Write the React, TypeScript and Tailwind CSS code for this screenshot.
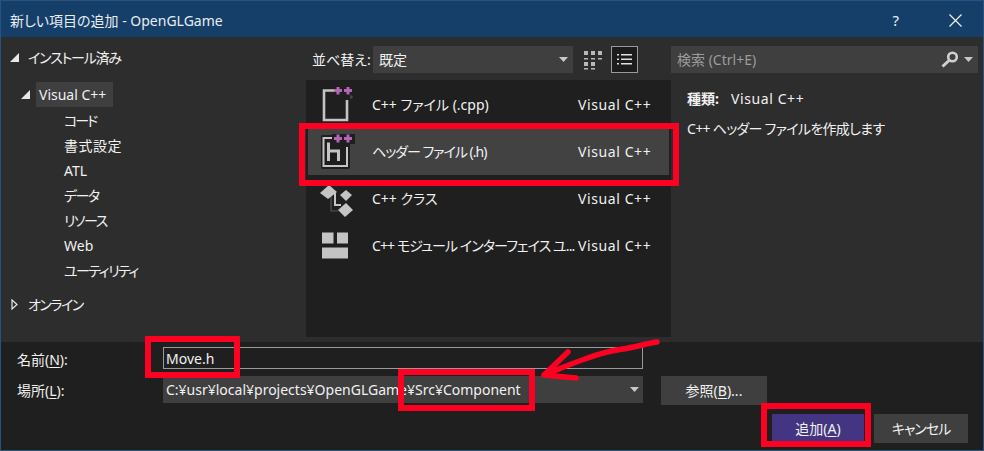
import { ReactNode } from "react";

const font = { fontFamily: '"Noto Sans", "Noto Sans CJK JP", sans-serif' };

function Tri({ open }: { open: boolean }) {
    return open ? (
        <svg width="9" height="9" viewBox="0 0 9 9" className="shrink-0"><path d="M9 0V9H0Z" fill="#e8e8e8" /></svg>
    ) : (
        <svg width="7" height="11" viewBox="0 0 7 11" className="shrink-0"><path d="M1 1L6 5.5L1 10Z" fill="none" stroke="#e8e8e8" strokeWidth="1.2" /></svg>
    );
}

function Plus({ x }: { x: number }) {
    return <path d={`M${x - 1.5} 0h3v2.5h2.5v3h-2.5v2.5h-3v-2.5h-2.5v-3h2.5z`} fill="#b565b5" />;
}

function CppIcon() {
    return (
        <svg width="36" height="36" viewBox="0 0 36 36">
            <path d="M14 3.5H4V33H27V13" fill="none" stroke="#c4c4c4" strokeWidth="2.6" />
            <path d="M31 8V12M30 10H33" fill="none" stroke="#555" strokeWidth="1" />
            <g transform="translate(0 -0.5)"><Plus x={18} /><Plus x={28} /></g>
        </svg>
    );
}

function HeaderIcon() {
    return (
        <svg width="36" height="36" viewBox="0 0 36 36">
            <rect x="1" y="1" width="29" height="34" rx="2" fill="#1e1e1e" />
            <path d="M14 4H3.5V32H27V13" fill="none" stroke="#c4c4c4" strokeWidth="2" />
            <path d="M8.5 8.5V27M8.5 17H18.5V27" fill="none" stroke="#c4c4c4" strokeWidth="3" />
            <rect x="12" y="-1" width="23" height="11" fill="#1e1e1e" />
            <g transform="translate(0 0.5)"><Plus x={18} /><Plus x={28} /></g>
        </svg>
    );
}

function ClassIcon() {
    return (
        <svg width="36" height="36" viewBox="0 0 36 36">
            <path d="M11 14V30H18" fill="none" stroke="#555" strokeWidth="1.2" />
            <path d="M15 12V24H21" fill="none" stroke="#c4c4c4" strokeWidth="2" />
            <path d="M0 12L9 4L17 11L8 18Z" fill="#c4c4c4" />
            <path d="M20 14L26 9L32 14L26 20Z" fill="#c4c4c4" />
            <path d="M18 29L26 22L33 29L25 36Z" fill="#c4c4c4" />
        </svg>
    );
}

function ModuleIcon() {
    return (
        <svg width="36" height="36" viewBox="0 0 36 36">
            <rect x="2" y="4.5" width="11.5" height="11" fill="#c4c4c4" />
            <rect x="17" y="4.5" width="11" height="11" fill="#c4c4c4" />
            <rect x="2" y="19.5" width="26" height="11" fill="#c4c4c4" />
        </svg>
    );
}

function VisualCpp() {
    return <span className="tracking-[0.6px] whitespace-nowrap">Visual C++</span>;
}

function Row({ icon, name, nameClass, selected }: { icon: ReactNode; name: string; nameClass?: string; selected?: boolean }) {
    return (
        <div className={`flex h-[47px] items-center mx-[2px] ${selected ? "bg-[#424242]" : ""}`}>
            <div className="w-[64px] pl-[12px] flex items-center">{icon}</div>
            <div className="w-[206px] whitespace-nowrap"><span className={nameClass}>{name}</span></div>
            <VisualCpp />
        </div>
    );
}

function Arrow() {
    return <svg width="9" height="5" viewBox="0 0 9 5"><path d="M0 0H9L4.5 5Z" fill="#c8c8c8" /></svg>;
}

function Key({ k }: { k: string }) {
    return <span className="underline underline-offset-2">{k}</span>;
}

export default function App() {
    const subItems = [
        { label: "コード", cls: "tracking-[-2px]" },
        { label: "書式設定", cls: "tracking-[0.5px]" },
        { label: "ATL", cls: "" },
        { label: "データ", cls: "tracking-[-1.5px]" },
        { label: "リソース", cls: "tracking-[-1.5px]" },
        { label: "Web", cls: "" },
        { label: "ユーティリティ", cls: "tracking-[-1.5px]" },
    ];

    return (
        <div style={font} className="relative w-[984px] h-[451px] flex flex-col overflow-hidden border-x border-b border-[#28527f] bg-[#2d2d2d] text-[14px] text-[#f1f1f1] [font-feature-settings:'palt']">
            <div className="h-[37px] shrink-0 bg-[#153e69] flex items-center pl-[9px] pr-[21px] pt-[3px] border-t border-[#28527f]">
                <span className="flex-1 text-[#e8edf2]">新しい項目の追加 - OpenGLGame</span>
                <span className="text-[15px] mr-[50px]">?</span>
                <svg width="13" height="13" viewBox="0 0 13 13"><path d="M0.5 0.5L12.5 12.5M12.5 0.5L0.5 12.5" stroke="#f1f1f1" strokeWidth="1.2" /></svg>
            </div>

            <div className="h-[305px] shrink-0 flex">
                <div className="w-[305px] shrink-0 pt-[8px]">
                    <div className="h-[25px] flex items-center pl-[9px] gap-[9px]"><Tri open /><span className="tracking-[-1.2px]">インストール済み</span></div>
                    <div className="h-[25px] mt-[12px] flex items-center pl-[20px] gap-[6px]">
                        <Tri open />
                        <span className="bg-[#3f3f3f] h-[25px] w-[77px] pl-[3px] flex items-center">Visual C++</span>
                    </div>
                    <div className="pt-[1px]">
                        {subItems.map((s) => (
                            <div key={s.label} className="h-[25px] flex items-center pl-[63px]"><span className={s.cls}>{s.label}</span></div>
                        ))}
                    </div>
                    <div className="h-[25px] mt-[9px] flex items-center pl-[10px] gap-[10px]"><Tri open={false} /><span className="tracking-[-1.5px]">オンライン</span></div>
                </div>

                <div className="w-[365px] shrink-0 flex flex-col pt-[9px]">
                    <div className="h-[27px] flex items-center pl-[6px]">
                        <span className="w-[61px]">並べ替え:</span>
                        <div className="w-[200px] h-[27px] bg-[#3f3f3f] flex items-center justify-between pl-[6px] pr-[5px]">
                            <span>既定</span>
                            <Arrow />
                        </div>
                        <svg width="18" height="20" viewBox="0 0 18 20" className="ml-[11px]">
                            <g fill="#b8b8b8">
                                <rect x="0" y="1" width="4" height="4" /><rect x="7" y="1" width="4" height="4" /><rect x="14" y="1" width="4" height="4" />
                                <rect x="0" y="8" width="4" height="1.5" /><rect x="7" y="8" width="4" height="1.5" /><rect x="14" y="8" width="4" height="1.5" />
                                <rect x="0" y="12" width="4" height="4" /><rect x="7" y="12" width="4" height="4" />
                                <rect x="0" y="18" width="4" height="1.5" /><rect x="7" y="18" width="4" height="1.5" />
                            </g>
                        </svg>
                        <div className="ml-[9px] w-[27px] h-[27px] border border-[#9a9a9a] bg-[#1c1c1c] flex items-center justify-center">
                            <svg width="15" height="13" viewBox="0 0 15 13" fill="#e0e0e0">
                                <rect x="0" y="1" width="2" height="1.5" /><rect x="4" y="1" width="11" height="1.5" />
                                <rect x="0" y="5.5" width="2" height="1.5" /><rect x="4" y="5.5" width="11" height="1.5" />
                                <rect x="0" y="10" width="2" height="1.5" /><rect x="4" y="10" width="11" height="1.5" />
                            </svg>
                        </div>
                    </div>
                    <div className="mt-[7px] h-[257px] bg-[#1f1f1f] pt-[1px]">
                        <Row icon={<CppIcon />} name="C++ ファイル (.cpp)" />
                        <Row icon={<HeaderIcon />} name="ヘッダー ファイル (.h)" nameClass="tracking-[-1px]" selected />
                        <Row icon={<ClassIcon />} name="C++ クラス" />
                        <Row icon={<ModuleIcon />} name="C++ モジュール インターフェイス ユ..." nameClass="tracking-[-0.9px]" />
                    </div>
                </div>

                <div className="flex-1 pt-[9px] pr-[5px]">
                    <div className="h-[27px] bg-[#3f3f3f] flex items-center pl-[6px] pr-[5px]">
                        <span className="flex-1 text-[#9c9c9c]">検索 (Ctrl+E)</span>
                        <svg width="18" height="17" viewBox="0 0 18 17" className="mr-[5px]">
                            <circle cx="11.5" cy="6" r="4.3" fill="none" stroke="#d0d0d0" strokeWidth="2.6" />
                            <path d="M8 9.5L1.5 15.5" stroke="#d0d0d0" strokeWidth="3" />
                        </svg>
                        <Arrow />
                    </div>
                    <div className="mt-[13px] pl-[16px]">
                        <div className="h-[25px] flex items-center"><span className="w-[44px] font-bold">種類:</span><VisualCpp /></div>
                        <div className="mt-[5px] h-[25px] flex items-center tracking-[-0.7px]">C++ ヘッダー ファイルを作成します</div>
                    </div>
                </div>
            </div>

            <div className="flex-1 bg-[#1f1f1f] pt-[5px] pl-[16px] pr-[15px]">
                <div className="flex items-center h-[22px]">
                    <span className="w-[146px] pt-[2px]">名前(<Key k="N" />):</span>
                    <div className="w-[480px] h-[22px] border border-[#9a9a9a] pl-[2px] flex items-center">Move.h</div>
                </div>
                <div className="flex items-center mt-[7px] h-[29px]">
                    <span className="w-[146px]">場所(<Key k="L" />):</span>
                    <div className="w-[480px] h-[27px] bg-[#3f3f3f] pl-[3px] pr-[4px] flex items-center justify-between self-start">
                        <span>C:¥usr¥local¥projects¥OpenGLGame¥Src¥Component</span>
                        <Arrow />
                    </div>
                    <button className="ml-[18px] w-[106px] h-[29px] bg-[#3f3f3f]">参照(<Key k="B" />)...</button>
                </div>
                <div className="flex justify-end gap-[10px] mt-[9px]">
                    <button className="w-[92px] h-[29px] bg-[#433582]">追加(<Key k="A" />)</button>
                    <button className="w-[94px] h-[29px] bg-[#3f3f3f] tracking-[-1px]">キャンセル</button>
                </div>
            </div>

            <div className="absolute left-[298px] top-[123px] w-[380px] h-[63px] border-[6px] border-[#ff0022]" />
            <div className="absolute left-[144px] top-[336px] w-[95px] h-[42px] border-[6px] border-[#ff0022]" />
            <div className="absolute left-[397px] top-[369px] w-[137px] h-[42px] border-[6px] border-[#ff0022]" />
            <div className="absolute left-[760px] top-[403px] w-[110px] h-[44px] border-[6px] border-[#ff0022]" />
            <svg className="absolute left-[534px] top-[335px]" width="130" height="50" viewBox="0 0 130 50">
                <path d="M122 7C110 9 100 12 88 14C75 16 60 20 50 24C35 29 22 35 9 40M33 17L9 40L41 43" fill="none" stroke="#ff0022" strokeWidth="5.5" strokeLinecap="round" strokeLinejoin="round" />
            </svg>
        </div>
    );
}
